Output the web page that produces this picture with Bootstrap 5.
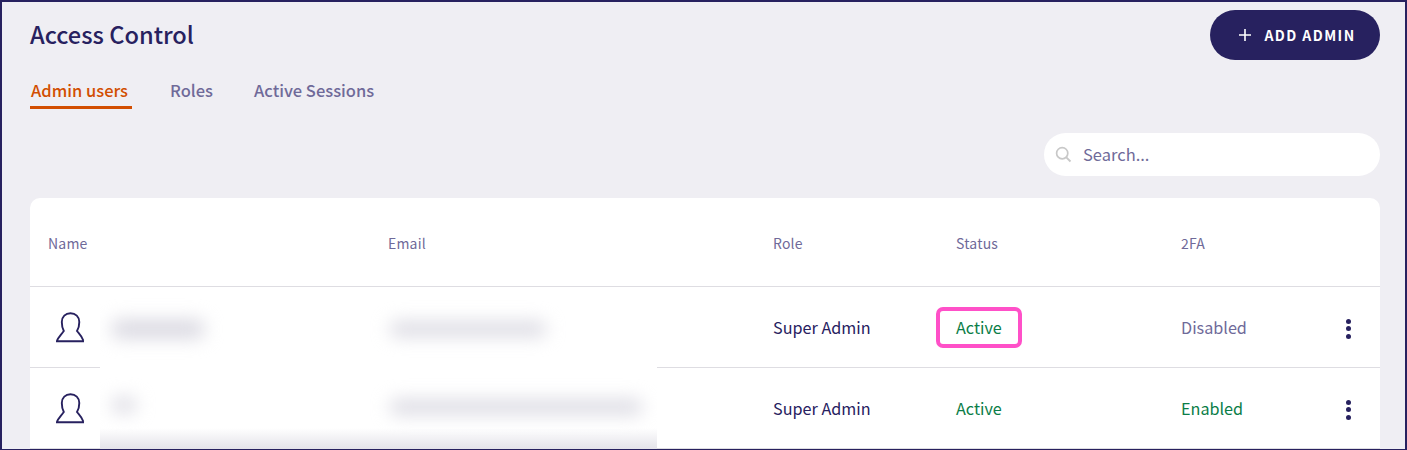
<!DOCTYPE html>
<html lang="en">
<head>
  <meta charset="UTF-8">
  <meta name="viewport" content="width=device-width, initial-scale=1.0">
  <title>Access Control</title>
  <link href="https://cdn.jsdelivr.net/npm/bootstrap@5.3.3/dist/css/bootstrap.min.css" rel="stylesheet">
  <style>
    html, body { height: 450px; overflow: hidden; }
    body {
      background-color: #efeef3;
      color: #27215f;
      font-family: "Noto Sans CJK SC", "Open Sans", sans-serif;
      font-size: 16px;
    }
    .app-frame {
      height: 450px;
      overflow: hidden;
      border: solid #27215f;
      border-width: 2px 2px 1px 2px;
      padding: 8px 25px 0 28px;
      position: relative;
    }
    .page-title { font-size: 23.6px; font-weight: 500; line-height: 48px; margin: 0; }
    .add-btn {
      width: 170px; height: 50px;
      background: #27215f; color: #fff;
      border: 0; border-radius: 25px;
      font-size: 14px; font-weight: 700; letter-spacing: 1.45px;
      padding-left: 16px;
    }
    .add-btn:hover { background: #27215f; color: #fff; }
    .tab-row { margin-top: 13px; gap: 37px; }
    .tab-row a {
      color: #6f6a99; font-size: 16.5px; font-weight: 500; text-decoration: none;
      padding: 0 1px; height: 36px; line-height: 34px; display: block;
    }
    .tab-row a.current { color: #d24e01; border-bottom: 3px solid #d24e01; padding: 0 4px 0 1px; }
    .tab-row a.current + a + a { margin-left: 2px; }
    .search-box {
      width: 336px; height: 43px;
      background: #fff; border-radius: 22px;
      margin-top: 24px; margin-left: auto;
      padding-left: 11px; gap: 9px;
    }
    .search-box input {
      border: 0; outline: 0; background: transparent; flex: 1;
      font-size: 16.5px; color: #6f6a99;
    }
    .search-box input::placeholder { color: #6f6a99; opacity: 1; }
    .admin-card {
      background: #fff; border-radius: 10px 10px 0 0;
      margin-top: 22px; height: 300px;
    }
    .admin-table { table-layout: fixed; width: 100%; margin: 0; border-collapse: collapse; }
    .admin-table th {
      height: 88px; padding: 4px 0 0 18px; vertical-align: middle;
      font-size: 14px; font-weight: 400; color: #6f6a99;
      border-bottom: 1px solid #dedde2; letter-spacing: 0.2px;
    }
    .admin-table td {
      height: 81px; padding: 2px 0 0 18px; vertical-align: middle;
      font-size: 16.2px; color: #27215f;
      border-bottom: 1px solid #dedde2;
    }
    .admin-table td.state-on { color: #0b7d48; }
    .admin-table td.state-off { color: #6f6a99; }
    .admin-table td.user-cell { padding-left: 24px; }
    .admin-table td.kebab-cell { padding: 0 4px 0 0; text-align: center; }
    .flagged { position: relative; display: inline-block; }
    .flagged::after {
      content: ""; position: absolute;
      inset: -8px -20px -8px -20px;
      border: 4px solid #ff50c8; border-radius: 7px;
    }
    .kebab { display: inline-flex; flex-direction: column; gap: 2.5px; vertical-align: middle; }
    .kebab i { display: block; width: 5px; height: 5px; border-radius: 50%; background: #27215f; }
    .redact {
      position: absolute; left: 98px; top: 296px; width: 557px; height: 154px;
      background: #fff; overflow: hidden;
    }
    .redact::after {
      content: ""; position: absolute; left: 0; right: 0; bottom: 0; height: 24px;
      background: linear-gradient(to bottom, rgba(224,223,230,0), #e0dfe6);
    }
    .smear { position: absolute; background: #d8d7e0; filter: blur(9px); border-radius: 6px; }
  </style>
</head>
<body>
  <div class="app-frame">
    <div class="d-flex justify-content-between align-items-start">
      <h1 class="page-title">Access Control</h1>
      <button class="btn add-btn d-flex align-items-center justify-content-center gap-2">
        <svg width="14" height="14" viewBox="0 0 14 14" class="me-1"><path d="M7 1v12M1 7h12" stroke="#fff" stroke-width="1.6" fill="none"/></svg>
        ADD ADMIN
      </button>
    </div>

    <!-- Tabs -->
    <div class="d-flex tab-row">
      <a class="current" href="#">Admin users</a>
      <a href="#">Roles</a>
      <a href="#">Active Sessions</a>
    </div>

    <div class="search-box d-flex align-items-center">
      <svg width="17" height="17" viewBox="0 0 17 17"><circle cx="7.2" cy="7.2" r="5.6" fill="none" stroke="#c8c8c8" stroke-width="1.7"/><path d="M11.3 11.3l4.2 4.2" stroke="#c8c8c8" stroke-width="1.9"/></svg>
      <input type="text" placeholder="Search...">
    </div>

    <!-- Admin table -->
    <div class="admin-card">
      <table class="admin-table">
        <colgroup>
          <col style="width:340px"><col style="width:385px"><col style="width:183px"><col style="width:225px"><col style="width:157px"><col>
        </colgroup>
        <thead>
          <tr><th>Name</th><th>Email</th><th>Role</th><th>Status</th><th>2FA</th><th></th></tr>
        </thead>
        <tbody>
          <tr>
            <td class="user-cell"><svg width="32" height="32" viewBox="0 0 32 32"><path d="M2 29.300h28M2.800 29C4 25.500 6.500 23.500 9.800 19 8.500 16.500 7.800 13.500 7.800 10 7.800 4.500 11.500 1.300 16.500 1.300S25.300 4.500 25.300 10C25.300 13.500 24.500 16.500 23 19 25 21.500 27.500 23.500 29.300 28.500" fill="none" stroke="#27215f" stroke-width="1.900"/></svg></td>
            <td></td>
            <td>Super Admin</td>
            <td class="state-on"><span class="flagged">Active</span></td>
            <td class="state-off">Disabled</td>
            <td class="kebab-cell"><span class="kebab"><i></i><i></i><i></i></span></td>
          </tr>
          <tr>
            <td class="user-cell"><svg width="32" height="32" viewBox="0 0 32 32"><path d="M2 29.300h28M2.800 29C4 25.500 6.500 23.500 9.800 19 8.500 16.500 7.800 13.500 7.800 10 7.800 4.500 11.500 1.300 16.500 1.300S25.300 4.500 25.300 10C25.300 13.500 24.500 16.500 23 19 25 21.500 27.500 23.500 29.300 28.500" fill="none" stroke="#27215f" stroke-width="1.900"/></svg></td>
            <td></td>
            <td>Super Admin</td>
            <td class="state-on">Active</td>
            <td class="state-on">Enabled</td>
            <td class="kebab-cell"><span class="kebab"><i></i><i></i><i></i></span></td>
          </tr>
        </tbody>
      </table>
    </div>

    <!-- blurred out names and emails -->
    <div class="redact">
      <div class="smear" style="left:12px;top:22px;width:92px;height:18px"></div>
      <div class="smear" style="left:290px;top:24px;width:156px;height:14px"></div>
      <div class="smear" style="left:12px;top:100px;width:24px;height:14px"></div>
      <div class="smear" style="left:290px;top:102px;width:252px;height:14px"></div>
    </div>
  </div>
  <script src="https://cdn.jsdelivr.net/npm/bootstrap@5.3.3/dist/js/bootstrap.bundle.min.js"></script>
</body>
</html>
